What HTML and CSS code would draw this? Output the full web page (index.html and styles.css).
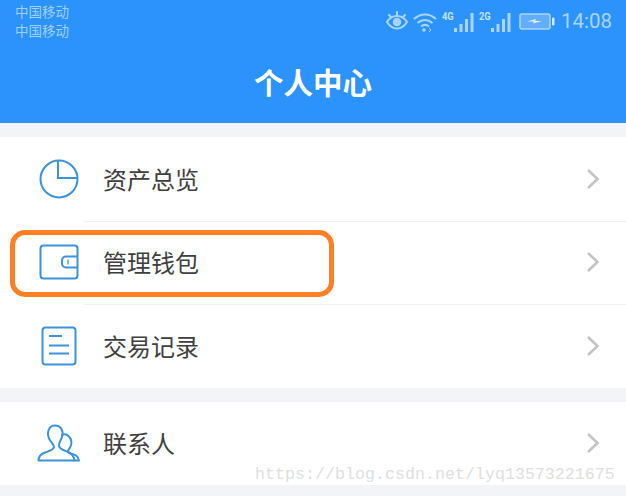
FILE: index.html
```html
<!DOCTYPE html>
<html lang="zh">
<head>
<meta charset="utf-8">
<title>个人中心</title>
<link rel="stylesheet" href="styles.css">
</head>
<body>
<div class="page">
  <header class="header">
    <div class="status">
      <div class="carrier"><span>中国移动</span><span>中国移动</span></div>
      <div class="indicators">
        <svg class="eye" width="24" height="20" viewBox="0 0 24 20" fill="none" stroke="#a9d4fd" stroke-width="2" stroke-linecap="round"><path d="M2 11c2.500-4 6-6 10-6s7.500 2 10 6c-2.500 4-6 6.500-10 6.500S4.500 15 2 11z"/><circle cx="12" cy="11" r="3.300" fill="#a9d4fd"/><path d="M4 4l2 2M12 1v2.500M20 4l-2 2"/></svg>
        <svg class="wifi" width="24" height="20" viewBox="0 0 24 20" fill="none" stroke="#a9d4fd" stroke-width="2"><path d="M1 7c6.500-6 15.500-6 22 0M4.500 11c4.500-4 10.500-4 15 0M8 14.500c2.500-2 5.500-2 8 0"/><circle cx="11" cy="18" r="1.800" fill="#a9d4fd" stroke="none"/><path d="M16 16l2 2-2 2" stroke-width="1"/></svg>
        <div class="signal"><span class="net">4G</span><svg width="21" height="20" viewBox="0 0 21 20" fill="#a9d4fd"><rect x="0" y="16" width="3" height="4"/><rect x="5.500" y="12" width="3" height="8"/><rect x="11" y="7" width="3" height="13"/><rect x="16.500" y="1" width="3" height="19"/></svg></div>
        <div class="signal"><span class="net">2G</span><svg width="21" height="20" viewBox="0 0 21 20" fill="#a9d4fd"><rect x="0" y="16" width="3" height="4"/><rect x="5.500" y="12" width="3" height="8"/><rect x="11" y="7" width="3" height="13"/><rect x="16.500" y="1" width="3" height="19"/></svg></div>
        <svg class="battery" width="36" height="18" viewBox="0 0 36 18"><rect x="1" y="1" width="30" height="15" rx="2" fill="#63aefc" stroke="#a9d4fd" stroke-width="1.500"/><rect x="33" y="4.500" width="2.500" height="8" rx="1" fill="#d6eafe"/><path d="M8 8.500l9-2.500-1 2h7l-9 2.500 1-2z" fill="#e4f1ff"/></svg>
        <span class="time">14:08</span>
      </div>
    </div>
    <h1 class="title">个人中心</h1>
  </header>

  <section class="group">
    <a class="row">
      <svg class="icon" width="40" height="40" viewBox="0 0 40 40" fill="none" stroke="#3d93d9" stroke-width="2"><circle cx="20" cy="20" r="18.500"/><path d="M19 1.500V19h19.500"/></svg>
      <span class="label">资产总览</span>
      <svg class="chev" width="14" height="22" viewBox="0 0 14 22" fill="none" stroke="#c4c4c6" stroke-width="2.600"><path d="M2 2l9.500 9L2 20"/></svg>
    </a>
    <a class="row">
      <svg class="icon" width="40" height="36" viewBox="0 0 40 36" fill="none" stroke="#3d93d9" stroke-width="2"><rect x="1.500" y="1.500" width="37" height="33" rx="3"/><path d="M38 12.500H27a4 4 0 0 0-4 4v3a4 4 0 0 0 4 4h11"/><path d="M29 15.500v5" stroke="#7db8e8"/></svg>
      <span class="label">管理钱包</span>
      <svg class="chev" width="14" height="22" viewBox="0 0 14 22" fill="none" stroke="#c4c4c6" stroke-width="2.600"><path d="M2 2l9.500 9L2 20"/></svg>
    </a>
    <a class="row">
      <svg class="icon" width="36" height="40" viewBox="0 0 36 40" fill="none" stroke="#3d93d9" stroke-width="2"><rect x="1.500" y="1.500" width="33" height="37" rx="3"/><path d="M8 10h13M8 19.500h20M8 27.500h20"/></svg>
      <span class="label">交易记录</span>
      <svg class="chev" width="14" height="22" viewBox="0 0 14 22" fill="none" stroke="#c4c4c6" stroke-width="2.600"><path d="M2 2l9.500 9L2 20"/></svg>
    </a>
  </section>

  <section class="group">
    <a class="row">
      <svg class="icon" width="44" height="38" viewBox="0 0 44 38" fill="none" stroke="#3d93d9" stroke-width="2" stroke-linejoin="round" stroke-linecap="round"><path d="M1.500 36.500C1.500 32 4 30 8 28.500c4.500-1.500 8.500-2.500 9-5.500.3-2-3-4.500-5-8.500C9.500 8 12 1.500 18 1.500S27 7 25 13c-1.200 3.500-3.500 6-3 9 .5 3 4 4 8 5.500 4 1.500 7 4 7.500 9z"/><path d="M25 11c2-1 5-.5 7 1.500 3 3 3 8 1 11-1 1.500-2.500 3-2 4.500 1 1.500 5 1.500 8 3.500 2 1.500 3 3 3 5H37.500"/></svg>
      <span class="label">联系人</span>
      <svg class="chev" width="14" height="22" viewBox="0 0 14 22" fill="none" stroke="#c4c4c6" stroke-width="2.600"><path d="M2 2l9.500 9L2 20"/></svg>
    </a>
  </section>

  <div class="highlight"></div>
  <div class="watermark">https://blog.csdn.net/lyq13573221675</div>
</div>
</body>
</html>
```

FILE: styles.css
```css
* { box-sizing: border-box; }
html, body { margin: 0; padding: 0; }
body { background: #f3f4f8; font-family: "Noto Sans CJK SC", "Noto Sans", sans-serif; }
.page { position: relative; width: 626px; height: 496px; overflow: hidden; background: #f3f4f8; }

.header { height: 123px; background: #2b93fb; color: #fff; display: flex; flex-direction: column; }
.status { height: 42px; padding: 2px 14px 0 15px; display: flex; justify-content: space-between; }
.carrier { display: flex; flex-direction: column; font-size: 13.500px; line-height: 19px; color: #9fcffd; }
.indicators { display: flex; align-items: center; height: 36px; margin-top: 1px; }
.eye { margin-right: 4px; }
.wifi { margin-right: 5px; margin-top: 1px; }
.signal { display: flex; align-items: flex-end; height: 20px; margin-right: 4px; margin-top: 2px; }
.net { font: 700 11px/11px "Roboto", sans-serif; color: #c3e0fe; align-self: flex-start; margin-top: -1px; margin-right: -2px; transform: scaleX(.85); transform-origin: left top; }
.battery { margin-left: 3px; margin-right: 6px; margin-top: 2px; }
.time { font: 400 20.500px/24px "Roboto", sans-serif; color: #a9d4fd; }
.title { margin: 19px 0 0; text-align: center; font-size: 29.500px; line-height: 40px; font-weight: 700; }

.group { background: #fff; margin-top: 14px; }
.row { position: relative; display: flex; align-items: center; height: 83.500px; color: #3f3f3f; }
.row + .row::before { content: ""; position: absolute; top: 0; left: 84px; right: 0; height: 1px; background: #f0f0f2; }
.icon { position: absolute; left: 59px; top: 50%; transform: translate(-50%, -50%); }
.label { margin-left: 103px; font-size: 24px; line-height: 34px; }
.chev { margin-left: auto; margin-right: 26px; }

.highlight { position: absolute; left: 9.500px; top: 229.500px; width: 324px; height: 67px; border: 5.500px solid #ff7f25; border-radius: 15px; }
.watermark { position: absolute; left: 255px; top: 465px; font: 400 16.670px/20px "Liberation Mono", monospace; color: #e0e0e0; white-space: nowrap; }
```
